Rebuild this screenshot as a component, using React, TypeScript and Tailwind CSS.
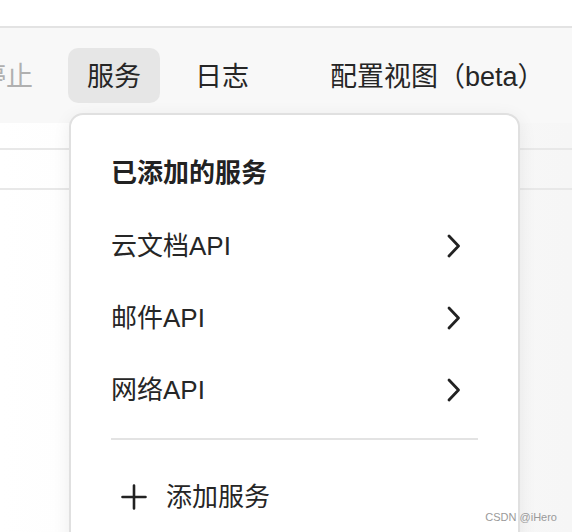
import React from 'react';

const font = { fontFamily: '"Liberation Sans", "Noto Sans CJK SC", "Noto Sans", sans-serif' };

const tabs = [
  { label: '停止', muted: true },
  { label: '服务', active: true },
  { label: '日志' },
  { label: '配置视图（beta）', extra: true },
];

const services = ['云文档API', '邮件API', '网络API'];

const Chevron = () => (
  <svg width="16" height="24" viewBox="0 0 16 24" fill="none" className="mr-[16px]">
    <path d="M3 2 L12.5 12 L3 22" stroke="#222" strokeWidth="2.8" strokeLinecap="round" strokeLinejoin="round" />
  </svg>
);

const Plus = () => (
  <svg width="26" height="26" viewBox="0 0 26 26" fill="none">
    <path d="M13 1.5 V24.5 M1.5 13 H24.5" stroke="#222" strokeWidth="2.6" strokeLinecap="round" />
  </svg>
);

export default function App() {
  return (
    <div className="relative w-[572px] h-[532px] overflow-hidden bg-white" style={font}>
      <div className="h-[28px] bg-white border-b-2 border-[#e3e3e3]" />

      {/* toolbar */}
      <div className="h-[95px] bg-[#f8f8f8] flex items-center">
        <div className="flex items-center gap-[16px] ml-[-40px]">
          {tabs.map(t => (
            <div
              key={t.label}
              className={`h-[55px] px-[19px] pt-[4px] rounded-[10px] flex items-center text-[27px] leading-none whitespace-nowrap ${
                t.active ? 'bg-[#e6e6e6] text-[#262626]' : t.muted ? 'text-[#b0b0b0]' : 'text-[#262626]'
              } ${t.extra ? 'ml-[27px]' : ''}`}
            >
              {t.label}
            </div>
          ))}
        </div>
      </div>

      {/* table behind */}
      <div className="h-full bg-gradient-to-r from-white to-[#f6f6f6]">
        <div className="h-[27px] border-b-2 border-[#e8e8e8]" />
        <div className="h-[40px] border-b-2 border-[#e8e8e8]" />
      </div>

      {/* dropdown */}
      <div className="absolute left-[69px] top-[113px] w-[451px] h-[440px] bg-white border-2 border-[#e0e0e0] rounded-[14px] shadow-[0_4px_18px_rgba(0,0,0,0.07)] pl-[40px] pr-[40px] pt-[36px]">
        <div className="h-[44px] flex items-center text-[26px] font-bold text-[#222]">已添加的服务</div>
        <div className="mt-[15px]">
          {services.map(s => (
            <div key={s} className="h-[72px] flex items-center justify-between text-[26px] text-[#262626]">
              <span>{s}</span>
              <Chevron />
            </div>
          ))}
        </div>
        <div className="mt-[12px] h-[2px] bg-[#e3e3e3]" />
        <div className="mt-[21px] h-[72px] flex items-center gap-[19px] pl-[10px] text-[26px] text-[#262626]">
          <Plus />
          <span>添加服务</span>
        </div>
      </div>

      <div className="absolute right-[15px] bottom-[9px] text-[11px] text-[#9a9a9a] leading-none">
        CSDN @iHero
      </div>
    </div>
  );
}
